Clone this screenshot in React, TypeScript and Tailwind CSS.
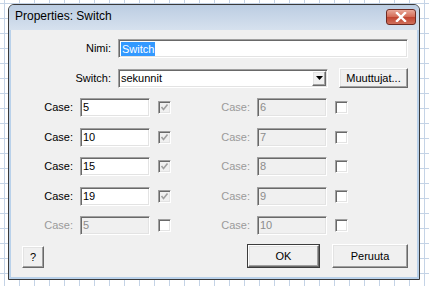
import React from 'react';

const sunken = 'border border-t-[#a0a0a0] border-l-[#a0a0a0] border-b-white border-r-white shadow-[inset_1px_1px_0_#696969,inset_-1px_-1px_0_#e3e3e3]';
const raised = 'border border-t-white border-l-white border-b-[#696969] border-r-[#696969] shadow-[inset_-1px_-1px_0_#a0a0a0,inset_1px_1px_0_#e3e3e3] bg-[#f0f0f0]';

function Check({ checked }: { checked: boolean }) {
  return (
    <div className={`w-[13px] h-[13px] flex items-center justify-center ${sunken} ${checked ? 'bg-[#f0f0f0]' : 'bg-white'}`}>
      {checked && (
        <svg width="9" height="9" viewBox="0 0 9 9">
          <path d="M1.5 4 L3.5 6.5 L7.5 1.5" stroke="#a0a0a0" strokeWidth="1.6" fill="none" />
        </svg>
      )}
    </div>
  );
}

function CaseField({ value, enabled, labelW }: { value: string; enabled: boolean; labelW: string }) {
  return (
    <>
      <div className={`${labelW} text-right ${enabled ? 'text-black' : 'text-[#9a9a9a]'}`}>Case:</div>
      <div
        className={`ml-[7px] w-[70px] h-[19px] pl-[2px] flex items-center ${sunken} ${enabled ? 'bg-white text-black' : 'bg-[#f0f0f0] text-[#8c8c8c]'}`}
      >
        {value}
      </div>
    </>
  );
}

export default function App() {
  const rows = [
    { left: '5', leftOn: true, right: '6' },
    { left: '10', leftOn: true, right: '7' },
    { left: '15', leftOn: true, right: '8' },
    { left: '19', leftOn: true, right: '9' },
    { left: '5', leftOn: false, right: '10' },
  ];
  const rowMargins = ['mt-[10px]', 'mt-[11px]', 'mt-[10px]', 'mt-[11px]', 'mt-[10px]'];

  return (
    <div
      className="w-[429px] h-[286px] overflow-hidden bg-white bg-[linear-gradient(to_right,#c4d3e6_1px,transparent_1px),linear-gradient(to_bottom,#c4d3e6_1px,transparent_1px)] bg-[size:15px_15px] bg-[position:4px_3px] pt-[4px] pl-[8px]"
      style={{ fontFamily: '"Liberation Sans", Arial, sans-serif' }}
    >
      <div className="w-[412px] h-[276px] border border-[#3a3a3a] rounded-t-[6px] flex flex-col bg-[#b9d1ea] overflow-hidden">
        {/* title bar */}
        <div className="h-[25px] shrink-0 flex items-start justify-between bg-[linear-gradient(to_bottom,#bccde2,#d6e1ee)]">
          <div className="pl-[6px] pt-[5px] text-[12px] text-black leading-none">Properties: Switch</div>
          <div className="mt-[4px] mr-[3px] w-[30px] h-[16px] rounded-[3px] border border-[#6e2b22] bg-[linear-gradient(to_bottom,#e9a899,#d36a55_50%,#c0432f_51%,#d0705c)] flex items-center justify-center">
            <svg width="12" height="10" viewBox="0 0 12 10">
              <path d="M2 1 L10 9 M10 1 L2 9" stroke="#ffffff" strokeWidth="2.4" strokeLinecap="square" />
            </svg>
          </div>
        </div>

        {/* client */}
        <div className="flex-1 mx-[2px] mb-[2px] bg-[#f0f0f0] text-[11px] text-black pt-[9px]">
          <div className="flex items-center">
            <div className="w-[100px] text-right">Nimi:</div>
            <div className={`ml-[7px] w-[290px] h-[19px] bg-white flex items-center pl-[2px] ${sunken}`}>
              <span className="bg-[#3399ff] text-white px-[1px] leading-[14px]">Switch</span>
            </div>
          </div>

          <div className="flex items-center mt-[10px]">
            <div className="w-[100px] text-right">Switch:</div>
            <div className={`ml-[7px] w-[210px] h-[19px] bg-white flex items-center justify-between pl-[2px] pr-[1px] ${sunken}`}>
              <span>sekunnit</span>
              <div className={`w-[14px] h-[15px] flex items-center justify-center ${raised}`}>
                <svg width="7" height="4" viewBox="0 0 7 4">
                  <path d="M0 0 H7 L3.5 4 Z" fill="#000" />
                </svg>
              </div>
            </div>
            <div className={`ml-[11px] w-[69px] h-[20px] flex items-center justify-center ${raised}`}>Muuttujat...</div>
          </div>

          {rows.map((r, i) => (
            <div key={i} className={`flex items-center ${rowMargins[i]}`}>
              <CaseField value={r.left} enabled={r.leftOn} labelW="w-[62px]" />
              <div className="ml-[8px]">
                <Check checked={r.leftOn} />
              </div>
              <CaseField value={r.right} enabled={false} labelW="w-[79px]" />
              <div className="ml-[8px]">
                <Check checked={false} />
              </div>
            </div>
          ))}

          <div className="flex items-end mt-[9px]">
            <div className={`ml-[11px] w-[22px] h-[22px] flex items-center justify-center ${raised}`}>?</div>
            <div className="ml-[203px] w-[73px] h-[24px] border border-[#3c3c3c]">
              <div className={`w-full h-full flex items-center justify-center ${raised}`}>OK</div>
            </div>
            <div className={`ml-[12px] w-[76px] h-[24px] flex items-center justify-center ${raised}`}>Peruuta</div>
          </div>
        </div>
      </div>
    </div>
  );
}
